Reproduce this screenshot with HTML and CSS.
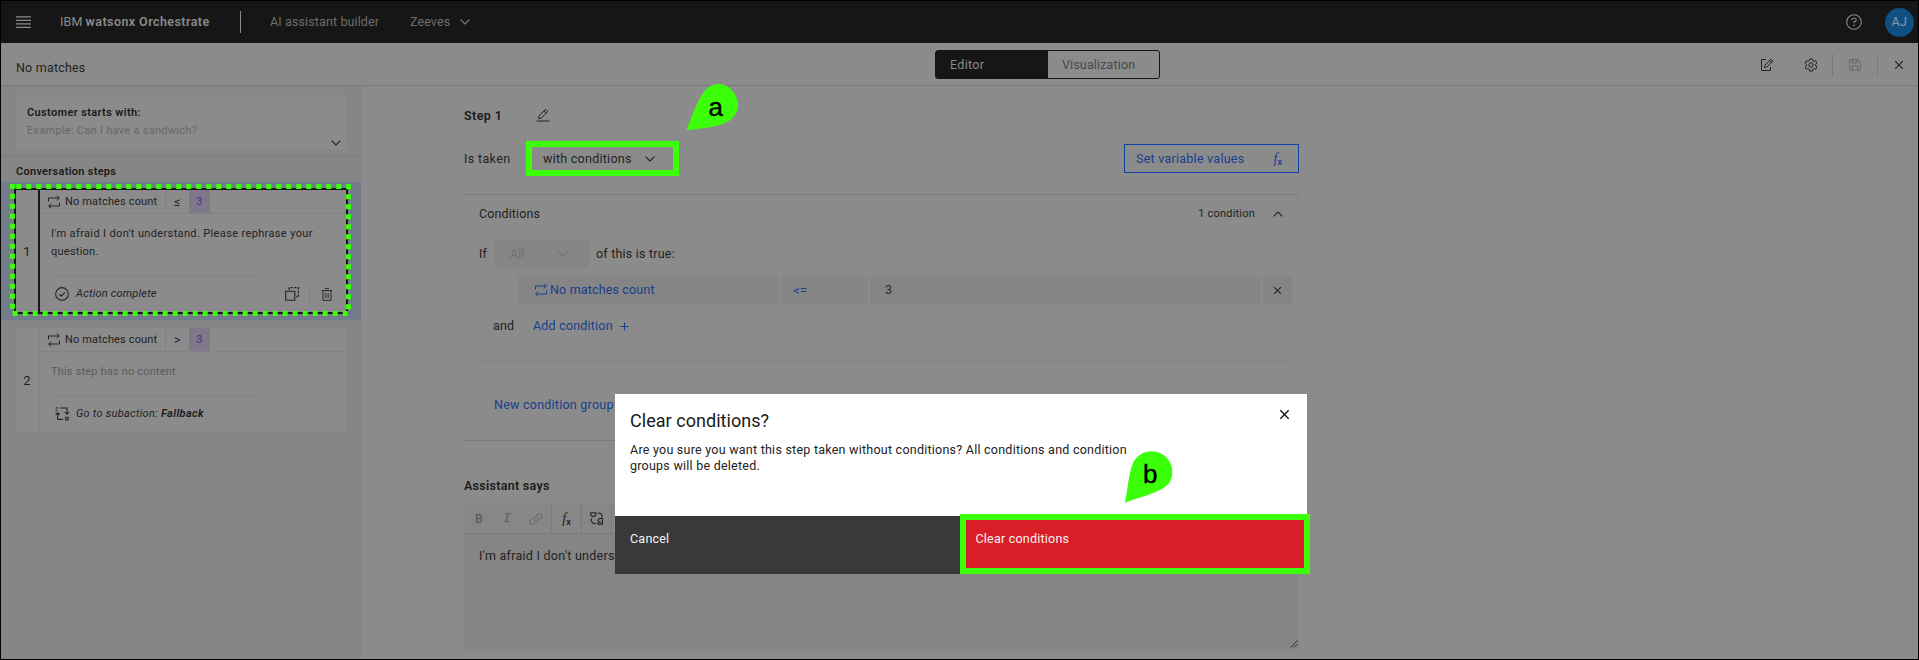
FILE: index.html
```html
<!DOCTYPE html>
<html lang="en">
<head>
<meta charset="utf-8">
<title>watsonx Orchestrate - No matches</title>
<link rel="stylesheet" href="styles.css">
</head>
<body>
<svg class="defs" width="0" height="0">
  <symbol id="chev" viewBox="0 0 10 6"><path d="M.6.6 5 5 9.4.6" fill="none" stroke="currentColor" stroke-width="1.1"/></symbol>
  <symbol id="close" viewBox="0 0 10 10"><path d="M1.2 1.2l7.6 7.6M8.8 1.2L1.2 8.8" fill="none" stroke="currentColor" stroke-width="1.2"/></symbol>
  <symbol id="loop" viewBox="0 0 14 14"><path d="M1.5 6.5V3h10.8M9.7.6 12.3 3 9.7 5.4M12.5 7.5V11H1.7M4.3 8.6 1.7 11l2.6 2.4" fill="none" stroke="currentColor" stroke-width="1"/></symbol>
  <symbol id="pencil" viewBox="0 0 14 14"><path d="M.5 13H13.5M2.5 10.6l.5-2.8L9.6 1.3l2.2 2.2L5.2 10.1zM8 2.9l2.2 2.2" fill="none" stroke="currentColor" stroke-width="1"/></symbol>
</svg>
<div class="frame">
  <header class="topbar">
    <svg class="menu" viewBox="0 0 15 12"><path d="M0 .8h15M0 4.3h15M0 7.8h15M0 11.3h15" stroke="currentColor" stroke-width="1.2"/></svg>
    <span class="brand">IBM <b>watsonx Orchestrate</b></span>
    <span class="rule"></span>
    <span class="builder">AI assistant builder</span>
    <span class="who">Zeeves</span>
    <svg class="chev"><use href="#chev"/></svg>
    <svg class="help" viewBox="0 0 16 16"><circle cx="8" cy="8" r="7.3" fill="none" stroke="currentColor" stroke-width="1.1"/><path d="M5.9 6.3V6c0-1 .7-1.7 1.7-1.7h.8c1 0 1.8.8 1.8 1.7S9.400 7.700 8.500 7.700H8v1.600" fill="none" stroke="currentColor" stroke-width="1.100"/><circle cx="8" cy="11.400" r=".8" fill="currentColor"/></svg>
    <span class="avatar">AJ</span>
  </header>

  <div class="subbar">
    <span class="name">No matches</span>
    <div class="toggle"><span class="on">Editor</span><span class="off">Visualization</span></div>
    <div class="tools">
      <svg class="i-edit" viewBox="0 0 14 14"><path d="M6 1.500H1.500v11h9V9M4.500 9.500l.4-2.300L11 1.100 12.900 3 6.800 9.100zM9.500 2.600l1.900 1.900" fill="none" stroke="currentColor"/></svg>
      <svg class="i-gear" viewBox="0 0 14 14"><circle cx="7" cy="7" r="2.200" fill="none" stroke="currentColor"/><path d="M5.700.9h2.600l.4 1.700 1.300.7 1.600-.5 1.300 2.200-1.200 1.200v1.600l1.200 1.200-1.300 2.200-1.600-.5-1.300.7-.4 1.700H5.700l-.4-1.700-1.300-.7-1.600.5L1.100 9l1.200-1.200V6.200L1.100 5l1.300-2.200 1.600.5 1.300-.7z" fill="none" stroke="currentColor"/></svg>
      <span class="bar"></span>
      <svg class="i-save" viewBox="0 0 12 12"><path d="M.7.700H8.800L11.300 3.200V11.300H.700zM3.300.900V3.900H8V.900M3.300 11V6.800H8.700V11" fill="none" stroke="currentColor"/></svg>
      <span class="bar"></span>
      <svg class="i-close"><use href="#close"/></svg>
    </div>
  </div>

  <div class="body">
    <aside class="side">
      <div class="starts">
        <b>Customer starts with:</b>
        <span>Example: Can I have a sandwich?</span>
        <svg class="chev"><use href="#chev"/></svg>
      </div>
      <h2>Conversation steps</h2>
      <div class="picked">
        <div class="step active">
          <div class="num">1</div>
          <div class="content">
            <div class="cond"><span class="var"><svg class="loop"><use href="#loop"/></svg>No matches count</span><span class="op">≤</span><span class="val">3</span></div>
            <p>I'm afraid I don't understand. Please rephrase your <br><span class="q">question.</span></p>
            <div class="next">
              <svg class="i-next" viewBox="0 0 13 13"><circle cx="6.500" cy="6.500" r="5.900" fill="none" stroke="currentColor"/><path d="M3.900 6.700l1.900 1.800L9.300 4.900" fill="none" stroke="currentColor"/></svg>
              <i class="done">Action complete</i>
              <svg class="i-copy" viewBox="0 0 14 14"><path d="M.7 4.200H9.800V13.300H.700z" fill="none" stroke="currentColor" stroke-width="1.100"/><path d="M4.200 3V.700H13.300V9.800H11" fill="none" stroke="currentColor" stroke-width="1.300" stroke-dasharray="2.400 1.200"/></svg>
              <span class="bar"></span>
              <svg class="i-trash" viewBox="0 0 12 13"><path d="M.8 2.600H11.200M2 2.600V12.400H10V2.600M4 .6H8M4.800 5V10M7.200 5V10" fill="none" stroke="currentColor"/></svg>
            </div>
          </div>
        </div>
      </div>
      <div class="step">
        <div class="num">2</div>
        <div class="content">
          <div class="cond"><span class="var"><svg class="loop"><use href="#loop"/></svg>No matches count</span><span class="op">&gt;</span><span class="val">3</span></div>
          <p class="empty">This step has no content</p>
          <div class="next last">
            <svg class="i-next" viewBox="0 0 13 13"><path d="M.6 1H3M.6 3.300H2.200M4.800 1H11.200V6.500M9 4.600l2.200 2.200L13 4.600M2.500 5.300V11.500H7.500M.6 7.200 2.500 5.300 4.400 7.200M9.900 9.500h2.300v2.500H9.900z" fill="none" stroke="currentColor"/></svg>
            <i class="goto">Go to subaction: <b>Fallback</b></i>
          </div>
        </div>
      </div>
    </aside>

    <main class="main">
      <div class="head"><b>Step 1</b><svg class="pencil"><use href="#pencil"/></svg></div>
      <div class="taken">
        <span class="lbl">Is taken</span>
        <span class="pick">with conditions</span>
        <svg class="chev"><use href="#chev"/></svg>
        <span class="setvar">Set variable values<span class="fx"><i>f</i><small>x</small></span></span>
      </div>
      <section class="conds">
        <div class="ctitle"><span>Conditions</span><small>1 condition</small><svg class="chev up"><use href="#chev"/></svg></div>
        <div class="if"><span class="iflbl">If</span><span class="all">All<svg class="chev"><use href="#chev"/></svg></span><span class="oft">of this is true:</span></div>
        <div class="row">
          <span class="c1"><svg class="loop"><use href="#loop"/></svg>No matches count</span>
          <span class="c2">&lt;=</span><span class="c3">3</span>
          <span class="c4"><svg class="x"><use href="#close"/></svg></span>
        </div>
        <div class="and"><span>and</span><a>Add condition</a><svg class="plus" viewBox="0 0 9 9"><path d="M4.500.5v8M.5 4.500h8" stroke="currentColor"/></svg></div>
        <div class="group"><a>New condition group</a></div>
      </section>
      <h3>Assistant says</h3>
      <div class="editor">
        <div class="bar3">
          <span class="fmt"><b>B</b><i>I</i><svg class="link" viewBox="0 0 14 12"><path d="M5.700 8.200A2.600 2.600 0 0 1 5.500 4.600L8.700 1.500A2.600 2.600 0 0 1 12.500 5.100L10.700 6.900M8.300 3.800A2.600 2.600 0 0 1 8.500 7.400L5.300 10.500A2.600 2.600 0 0 1 1.500 6.900L3.300 5.100" fill="none" stroke="currentColor" stroke-width=".9"/></svg></span>
          <span class="cell"><span class="fx"><i>f</i><small>x</small></span></span>
          <span class="cell"><svg class="i-var" viewBox="0 0 13 13"><path d="M.7.700H5.700V3L4 4.500H2.400L.700 3zM7.500 1.200h2.800L12 3v2.500M1.300 6.200V9l2 2.500H6M8 12.300V8.300l1.500-1.800h3V12.300zM9.800 9v1.800h1.500" fill="none" stroke="currentColor" stroke-width="1.100"/></svg></span>
        </div>
        <div class="area">I'm afraid I don't understand. Please rephrase your question.<svg class="grip" viewBox="0 0 8 8"><path d="M.5 7.500l7-7M4 7.500 7.500 4" stroke="currentColor" stroke-width=".9"/></svg></div>
      </div>
    </main>
  </div>
</div>

<div class="modal">
  <div class="mtop">
    <div class="mhead"><h1>Clear conditions?</h1><svg class="x"><use href="#close"/></svg></div>
    <p>Are you sure you want this step taken without conditions? All conditions and condition <br>groups will be deleted.</p>
  </div>
  <div class="mfoot"><span class="cancel">Cancel</span><span class="clear">Clear conditions</span></div>
</div>

<svg class="marks" viewBox="0 0 1919 660">
  <path d="M16.300 186.500H348.500V313.500H12.500V186.500H16.300" fill="none" stroke="#3cff0a" stroke-width="5" stroke-dasharray="5 5"/>
  <path d="M529 144H676V173H529z" fill="none" stroke="#3cff0a" stroke-width="6"/>
  <path d="M963 517H1307V571H963z" fill="none" stroke="#3cff0a" stroke-width="6"/>
  <path d="M686.300 130.500C692 116 698 99 704.500 91C712 82 724 82 731 89.500C740 98 740 110 733 117.500C724 127 704 128 686.300 130.500z" fill="#3cff0a"/>
  <path d="M1124.800 502.800C1128 489 1128.500 472 1133.500 462C1139 452 1151 448.500 1161 453.500C1172 459 1175.500 473 1169.500 482.500C1163 492 1143 496 1124.800 502.800z" fill="#3cff0a"/>
  <text x="715.800" y="116">a</text>
  <text x="1150.300" y="483">b</text>
</svg>
</body>
</html>
```
FILE: styles.css
```css
* { box-sizing: border-box; }
body {
  margin: 0; width: 1919px; height: 660px; overflow: hidden; position: relative;
  font-family: Roboto, "Noto Sans", sans-serif; font-size: 12.5px; letter-spacing: .2px;
  line-height: 16px; color: #222; background: #000;
}
svg { display: block; flex: none; }
.defs { position: absolute; }
b, h1, h2, h3 { font-weight: 600; color: #1a1a1a; }
h1, h2, h3, p { margin: 0; }
span, a, b, i { white-space: nowrap; }
.chev { width: 10px; height: 6px; }
.loop { width: 14px; height: 14px; }

.frame { height: 660px; border: 1px solid #000; background: #8b8b8b; display: flex; flex-direction: column; }

.topbar { height: 42px; background: #161616; display: flex; align-items: center; padding: 0 4px 0 15px; color: #8b8b8b; flex: none; }
.menu { width: 15px; height: 12px; margin-right: 29px; }
.brand { width: 180px; letter-spacing: .1px; }
.brand b { letter-spacing: .43px; color: #8b8b8b; }
.rule { width: 1px; height: 22px; background: #8b8b8b; margin-right: 29px; }
.builder { width: 140px; color: #6e6e6e; letter-spacing: .12px; }
.who { width: 50px; color: #6e6e6e; letter-spacing: .1px; }
.topbar .chev { color: #7d7d7d; }
.help { width: 16px; height: 16px; margin-left: auto; margin-right: 23px; color: #8b8b8b; }
.avatar { width: 29px; height: 29px; border-radius: 50%; background: #0f4f82; color: #8b9aa8; display: grid; place-items: center; letter-spacing: .5px; }

.subbar { height: 43px; border-bottom: 1px solid #7a7a7a; display: flex; padding-left: 15px; flex: none; }
.name { width: 919px; padding-top: 17px; }
.toggle { width: 225px; height: 29px; margin-top: 7px; border: 1px solid #161616; border-radius: 3px; display: flex; line-height: 28px; }
.on { width: 112px; background: #161616; color: #8b8b8b; padding-left: 14px; letter-spacing: .3px; }
.off { padding-left: 14px; color: #484848; letter-spacing: .14px; }
.tools { margin-left: auto; display: flex; align-items: center; padding-right: 14px; padding-top: 2px; }
.bar { width: 1px; height: 22px; background: #7a7a7a; }
.i-edit { width: 14px; height: 14px; margin-right: 30px; }
.i-gear { width: 14px; height: 14px; margin-right: 14px; }
.i-save { width: 12px; height: 12px; margin: 0 16px; color: #676767; }
.i-close { width: 10px; height: 10px; margin-left: 16px; }

.body { flex: 1; display: flex; min-height: 0; }
.side { width: 360px; background: #868686; flex: none; font-size: 11px; letter-spacing: .25px; }
.starts { margin: 9px 15px 7px; height: 54px; background: #8b8b8b; padding: 9px 11px 0; display: flex; flex-direction: column; line-height: 18px; }
.starts b { letter-spacing: .36px; }
.starts span { color: #666; letter-spacing: .28px; }
.starts .chev { align-self: flex-end; margin: 0 -6px 0 0; }
.side h2 { font-size: 11px; line-height: 16px; letter-spacing: .28px; border-top: 1px solid #7b7b7b; padding: 7px 15px 2px; height: 26px; }
.picked { height: 138px; background: #737c8a; padding: 6px 13px 0; margin-bottom: 8px; }
.step { margin: 0 15px; height: 104px; display: grid; grid-template-columns: 22px 306px; column-gap: 2px; }
.step > div { background: #8b8b8b; }
.step.active { margin: 0; height: 126px; border: 2px solid #161616; background: #161616; }
.num { display: grid; place-items: center; font-size: 13px; padding-top: 1px; }
.cond { display: flex; height: 24px; border-bottom: 1px solid #828282; line-height: 23px; }
.var { display: flex; align-items: center; width: 126px; padding-left: 7px; border-right: 1px solid #828282; letter-spacing: .15px; }
.var .loop { margin-right: 4px; }
.op { width: 23px; text-align: center; font-size: 12.5px; }
.val { width: 21px; text-align: center; background: #7f788a; color: #4f2b88; }
.step p { height: 62px; padding: 11px 0 0 11px; line-height: 18px; letter-spacing: .36px; white-space: nowrap; }
.q { letter-spacing: .25px; }
.step p.empty { color: #5a5a5a; letter-spacing: .18px; height: 43px; }
.next { margin-left: 15px; display: flex; align-items: center; height: 36px; background: linear-gradient(#828282, #828282) 0 0 / 205px 1px no-repeat; }
.next.last { padding-top: 2px; }
.i-next { width: 14px; height: 14px; margin-right: 7px; }
.done { letter-spacing: .2px; width: 209px; }
.goto { letter-spacing: .27px; }
.goto b { letter-spacing: .4px; }
.i-copy { width: 14px; height: 14px; }
.next .bar { background: #828282; margin: 0 11px 0 10px; }
.i-trash { width: 12px; height: 13px; color: #2a2a2a; }

.main { width: 938px; padding-left: 103px; }
.head { display: flex; align-items: center; padding-top: 22px; }
.head b { width: 72px; letter-spacing: .4px; }
.pencil { width: 14px; height: 14px; margin-top: -2px; }
.taken { display: flex; align-items: center; height: 29px; margin-top: 20px; }
.lbl { width: 79px; letter-spacing: .35px; }
.pick { width: 102px; letter-spacing: .26px; }
.setvar { margin-left: auto; width: 175px; height: 29px; border: 1px solid #0f42a4; color: #163f8e; display: flex; align-items: center; justify-content: space-between; padding: 0 17px 0 11px; letter-spacing: .25px; }
.fx { font-family: "Liberation Serif", serif; letter-spacing: -1px; font-size: 14px; line-height: 14px; }
.fx small { font: 600 9px Roboto, sans-serif; position: relative; top: 2px; margin-left: 1px; }
.conds { margin-top: 21px; border-top: 1px solid #7a7a7a; border-bottom: 1px solid #7a7a7a; height: 247px; padding: 0 7px 0 15px; }
.ctitle { display: flex; align-items: center; height: 37px; padding-right: 9px; letter-spacing: .12px; }
.ctitle small { font-size: 11px; letter-spacing: .2px; margin-left: auto; margin-right: 18px; }
.up { transform: scaleY(-1); }
.if { display: flex; align-items: center; height: 28px; margin-top: 8px; }
.iflbl { width: 16px; }
.all { width: 94px; height: 28px; background: #858585; color: #727272; display: flex; align-items: center; padding: 0 21px 0 15px; justify-content: space-between; margin-right: 7px; }
.row { display: grid; grid-template-columns: 260px 88px 391px 29px; column-gap: 2px; height: 28px; margin: 8px 0 0 39px; }
.row > span { background: #858585; display: flex; align-items: center; }
.row .c1 { padding-left: 16px; color: #163f8e; letter-spacing: .16px; }
.c1 .loop { margin-right: 2px; }
.row .c2 { padding-left: 12px; color: #163f8e; margin-left: 1px; font-size: 13.5px; letter-spacing: 0; }
.row .c3 { padding-left: 15px; color: #2e2e2e; }
.row .c4 { justify-content: center; }
.c4 .x { width: 9px; height: 9px; }
.and { display: flex; align-items: center; padding-left: 14px; margin-top: 14px; height: 16px; }
.and span { width: 40px; }
.and a { width: 87px; }
.and a, .group a, .plus { color: #163f8e; }
.plus { width: 9px; height: 9px; }
.group { border-top: 1px solid #818181; margin-top: 27px; padding: 35px 0 0 15px; letter-spacing: .24px; }
.main h3 { font-size: 12.5px; letter-spacing: .28px; line-height: 16px; padding: 37px 0 10px; }
.editor { height: 145px; background: #858585; }
.bar3 { height: 30px; border-bottom: 1px solid #7a7a7a; display: flex; background: #878787; }
.fmt { width: 88px; border-right: 1px solid #7a7a7a; display: flex; align-items: center; color: #606060; padding-left: 11px; }
.fmt b { width: 28px; font-size: 12px; color: #5c5c5c; }
.fmt i { width: 26px; font: italic 13px "Liberation Mono", monospace; }
.link { width: 14px; height: 12px; }
.cell { width: 30px; border-right: 1px solid #7a7a7a; display: grid; place-items: center; padding-right: 1px; }
.i-var { width: 13px; height: 13px; }
.area { position: relative; padding: 14px 15px; height: 115px; letter-spacing: .26px; }
.grip { position: absolute; right: 1px; bottom: 1px; width: 8px; height: 8px; }

.modal { position: absolute; left: 615px; top: 394px; width: 692px; height: 180px; display: flex; flex-direction: column; color: #222; }
.mtop { background: #fff; height: 122px; padding: 15px 15px 0; }
.mhead { display: flex; justify-content: space-between; height: 33px; }
.modal h1 { font-size: 18px; font-weight: 400; letter-spacing: .04px; line-height: 24px; }
.mhead .x { width: 11px; height: 11px; margin: 0 2px 0 0; color: #111; }
.modal p { letter-spacing: .24px; white-space: nowrap; }
.mfoot { height: 58px; display: grid; grid-template-columns: 346px 346px; color: #f4f4f4; letter-spacing: .22px; }
.cancel { background: #393939; padding: 15px; }
.clear { background: #da1e28; padding: 15px 14.500px; }

.marks { position: absolute; left: 0; top: 0; width: 1919px; height: 660px; }
.marks text { font: 26px "Liberation Sans", Arial, sans-serif; letter-spacing: 0; text-anchor: middle; fill: #000; stroke: #000; stroke-width: .4px; }
```
